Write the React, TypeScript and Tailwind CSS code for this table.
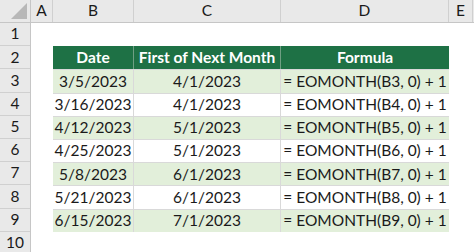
import React from "react";

const rows = [
  ["3/5/2023", "4/1/2023", "= EOMONTH(B3, 0) + 1"],
  ["3/16/2023", "4/1/2023", "= EOMONTH(B4, 0) + 1"],
  ["4/12/2023", "5/1/2023", "= EOMONTH(B5, 0) + 1"],
  ["4/25/2023", "5/1/2023", "= EOMONTH(B6, 0) + 1"],
  ["5/8/2023", "6/1/2023", "= EOMONTH(B7, 0) + 1"],
  ["5/21/2023", "6/1/2023", "= EOMONTH(B8, 0) + 1"],
  ["6/15/2023", "7/1/2023", "= EOMONTH(B9, 0) + 1"],
];

const cols = [
  { l: "A", w: "w-[22px]" },
  { l: "B", w: "w-[81px]" },
  { l: "C", w: "w-[147px]" },
  { l: "D", w: "w-[168px]" },
  { l: "E", w: "w-[24px]" },
];

export default function App() {
  return (
    <div
      className="w-[474px] h-[252px] overflow-hidden bg-white text-[15.5px] text-[#1a1a1a]"
      style={{ fontFamily: "Lato, 'Open Sans', sans-serif" }}
    >
      {/* column header */}
      <div className="flex h-[23px] bg-[#e9e9e9] border-b border-[#c6c6c6]">
        <div className="w-[31px] shrink-0 border-r border-[#c6c6c6] relative">
          <div className="absolute right-[3px] bottom-[3px] w-0 h-0 border-l-[16px] border-l-transparent border-b-[16px] border-b-[#b8b8b8]" />
        </div>
        {cols.map((c) => (
          <div
            key={c.l}
            className={`${c.w} shrink-0 border-r border-[#d0d0d0] flex items-center justify-center leading-none`}
          >
            {c.l}
          </div>
        ))}
      </div>
      <div className="flex">
        {/* row headers */}
        <div className="w-[31px] shrink-0 flex flex-col bg-[#e9e9e9] border-r border-[#c6c6c6]">
          {[1, 2, 3, 4, 5, 6, 7, 8, 9, 10].map((n) => (
            <div
              key={n}
              className="h-[23.2px] shrink-0 border-b border-[#d0d0d0] flex items-center justify-center leading-none"
            >
              {n}
            </div>
          ))}
        </div>
        <div className="flex flex-col">
          <div className="h-[23.2px]" />
          <div className="ml-[22px] flex flex-col w-[396px]">
            <div className="flex h-[23.2px] bg-[#1e7145] text-white font-bold">
              <div className="w-[81px] border-r border-[#6f9f83] flex items-center justify-center">Date</div>
              <div className="w-[147px] border-r border-[#6f9f83] flex items-center justify-center">First of Next Month</div>
              <div className="w-[168px] flex items-center justify-center">Formula</div>
            </div>
            {rows.map((r, i) => (
              <div
                key={i}
                className={`flex h-[23.2px] border-t border-[#d9d9d9] ${i % 2 === 0 ? "bg-[#e2efda]" : "bg-white"}`}
              >
                <div className="w-[81px] border-r border-[#d9d9d9] flex items-center justify-center">{r[0]}</div>
                <div className="w-[147px] border-r border-[#d9d9d9] flex items-center justify-center">{r[1]}</div>
                <div className="w-[168px] flex items-center justify-center">{r[2]}</div>
              </div>
            ))}
          </div>
        </div>
      </div>
    </div>
  );
}
